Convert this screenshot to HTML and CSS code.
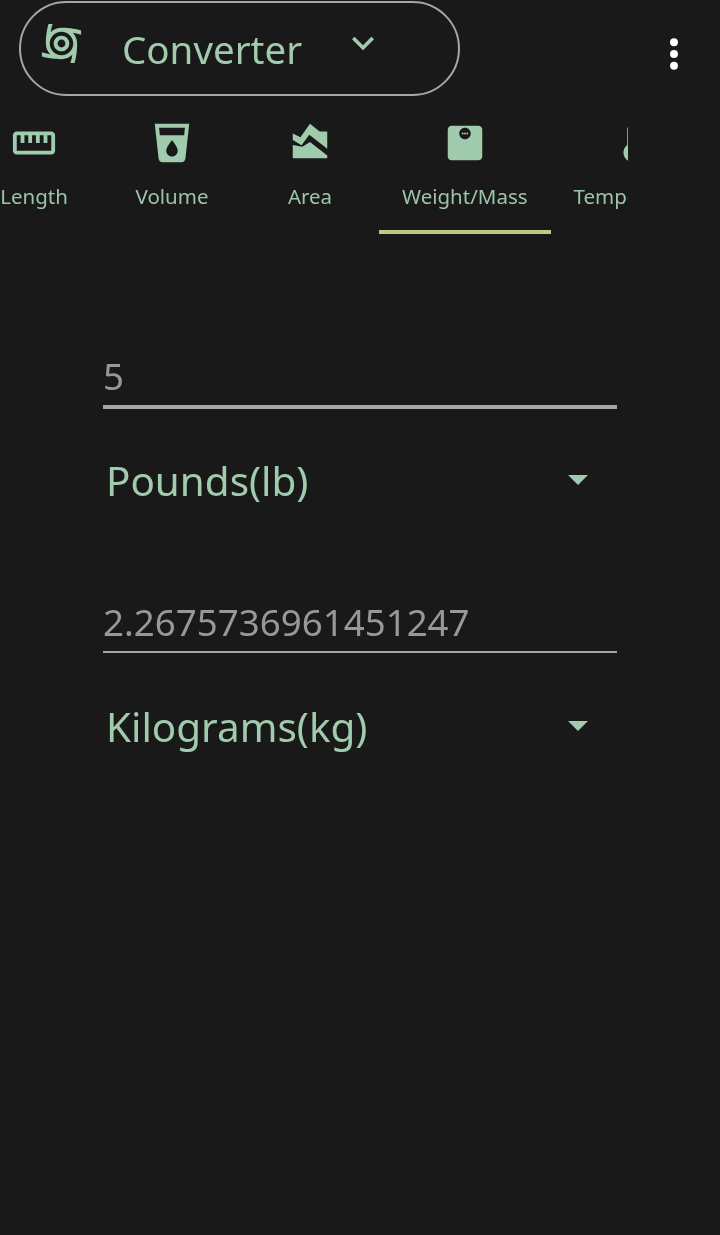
FILE: index.html
```html
<!DOCTYPE html>
<html lang="en">
<head>
<meta charset="utf-8">
<title>Converter</title>
<link rel="stylesheet" href="styles.css">
</head>
<body>
<header class="appbar">
  <div class="pill">
    <svg class="pill-logo" viewBox="0 0 24 24"><path fill-rule="evenodd" d="M22,7.47V5.35C20.05,4.77,16.56,4,12,4C9.85,4,7.89,4.86,6.46,6.24C6.59,5.39,6.86,3.84,7.47,2H5.35C4.77,3.95,4,7.44,4,12c0,2.15,0.86,4.11,2.24,5.54c-0.85-0.14-2.4-0.4-4.24-1.01v2.12C3.95,19.23,7.44,20,12,20c2.15,0,4.11-0.86,5.54-2.24c-0.14,0.85-0.4,2.4-1.01,4.24h2.12C19.23,20.05,20,16.56,20,12c0-2.15-0.86-4.11-2.24-5.54C18.61,6.59,20.16,6.86,22,7.47z M12,18c-3.31,0-6-2.69-6-6s2.69-6,6-6s6,2.69,6,6S15.31,18,12,18z"/><path fill-rule="evenodd" d="M12,8c-2.21,0-4,1.79-4,4s1.79,4,4,4s4-1.79,4-4S14.21,8,12,8z M12,14c-1.1,0-2-0.9-2-2s0.9-2,2-2s2,0.9,2,2S13.1,14,12,14z"/></svg>
    <span class="pill-title">Converter</span>
    <svg class="pill-chevron" viewBox="0 0 24 24"><path d="M16.59 8.59L12 13.17 7.41 8.59 6 10l6 6 6-6z"/></svg>
  </div>
  <svg class="menu" viewBox="0 0 24 24"><circle cx="12" cy="5.6" r="2.15"/><circle cx="12" cy="12" r="2.15"/><circle cx="12" cy="18.4" r="2.15"/></svg>
</header>
<nav class="tabs">
  <div class="tab-strip">
    <div class="tab">
      <svg class="tab-icon" viewBox="0 0 24 24"><path d="M21 6H3c-1.1 0-2 .9-2 2v8c0 1.1.9 2 2 2h18c1.1 0 2-.9 2-2V8c0-1.1-.9-2-2-2zm0 10H3V8h2v4h2V8h2v4h2V8h2v4h2V8h2v4h2V8h2v8z"/></svg>
      <span class="tab-label">Length</span>
    </div>
    <div class="tab">
      <svg class="tab-icon" viewBox="0 0 24 24"><path d="M3 2l2.01 18.23C5.13 21.23 5.97 22 7 22h10c1.03 0 1.87-.77 1.99-1.77L21 2H3zm9 17c-1.66 0-3-1.34-3-3 0-2 3-5.4 3-5.4s3 3.4 3 5.4c0 1.66-1.34 3-3 3zm6.33-11H5.67l-.44-4h13.53l-.43 4z"/></svg>
      <span class="tab-label">Volume</span>
    </div>
    <div class="tab">
      <svg class="tab-icon" viewBox="0 0 24 24"><path d="M3,13v7h18v-1.5l-9-7L8,14L3,13z M3,7l4,2l5-7l5,4h4v8.97l-9.4-7.31l-3.98,5.48L3,10.44V7z"/></svg>
      <span class="tab-label">Area</span>
    </div>
    <div class="tab tab-active">
      <svg class="tab-icon" viewBox="0 0 24 24"><path fill-rule="evenodd" d="M5 3h14c1.1 0 2 .9 2 2v14c0 1.1-.9 2-2 2H5c-1.1 0-2-.9-2-2V5c0-1.1.9-2 2-2zM12 4c-1.66 0-3 1.34-3 3s1.34 3 3 3 3-1.34 3-3-1.34-3-3-3z"/><circle cx="10.8" cy="7" r=".5"/><circle cx="12" cy="7" r=".5"/><circle cx="13.2" cy="7" r=".5"/></svg>
      <span class="tab-label">Weight/Mass</span>
    </div>
    <div class="tab">
      <svg class="tab-icon tab-icon-temp" viewBox="0 0 24 24"><path d="M15 13V5c0-1.66-1.34-3-3-3S9 3.34 9 5v8c-1.21.91-2 2.37-2 4 0 2.76 2.24 5 5 5s5-2.24 5-5c0-1.63-.79-3.09-2-4zm-4-8c0-.55.45-1 1-1s1 .45 1 1h-1v1h1v2h-1v1h1v2h-2V5z"/></svg>
      <span class="tab-label">Temperature</span>
    </div>
  </div>
</nav>
<main class="form">
  <section class="unit-group">
    <div class="field field-focused">5</div>
    <div class="select"><span>Pounds(lb)</span><i class="caret"></i></div>
  </section>
  <section class="unit-group">
    <div class="field">2.2675736961451247</div>
    <div class="select"><span>Kilograms(kg)</span><i class="caret"></i></div>
  </section>
</main>
</body>
</html>
```
FILE: styles.css
```css
* { box-sizing: border-box; }
html, body { margin: 0; height: 100%; }
body {
  background: #191919;
  color: #a1cbad;
  font-family: "Noto Sans", sans-serif;
  overflow: hidden;
}
svg { display: block; fill: #a1cbad; }
.appbar, .tabs, .form { will-change: opacity; }

.appbar {
  display: flex;
  align-items: flex-start;
  height: 106px;
  padding: 1px 0 0 19px;
}
.pill {
  display: flex;
  width: 441px;
  height: 95px;
  border: 2px solid #a6a6a6;
  border-radius: 48px;
  padding: 0 0 0 17px;
}
.pill-logo { width: 47px; height: 47px; margin-top: 17px; flex: none; }
.pill-title {
  margin-left: 37px;
  font-size: 38.5px;
  line-height: 92px;
  width: 219px;
}
.pill-chevron { width: 44px; height: 44px; margin-top: 18px; flex: none; }
.menu { width: 44px; height: 44px; margin: 31px 0 0 192px; fill: #fff; flex: none; }

.tabs { width: 628px; height: 128px; overflow: hidden; }
.tab-strip { display: flex; margin-left: -35px; width: 900px; height: 100%; }
.tab {
  display: flex;
  flex-direction: column;
  align-items: center;
  min-width: 138px;
  padding: 14px 23px 0;
  height: 128px;
  flex: none;
}
.tab-active { border-bottom: 4px solid #bdcb82; }
.tab-icon { width: 46px; height: 46px; flex: none; }
.tab-icon-temp { margin-right: 5px; }
.tab-label { margin-top: 15px; font-size: 20.5px; line-height: 30px; color: #9cc5a8; white-space: nowrap; }

.form { padding: 115px 103px 0; }
.unit-group { height: 246px; }
.field {
  padding: 0 0 2px;
  border-bottom: 2px solid #a6a6a6;
  color: #989898;
  font-size: 36.7px;
  line-height: 54px;
}
.field-focused { border-bottom-width: 4px; }
.select {
  display: flex;
  justify-content: space-between;
  align-items: center;
  padding: 0 29px 0 3px;
  margin-top: 44px;
  height: 60px;
  font-size: 40.4px;
  line-height: 60px;
}
.field-focused + .select { margin-top: 42px; }
.caret {
  width: 0;
  height: 0;
  margin-top: -2px;
  border-left: 10px solid transparent;
  border-right: 10px solid transparent;
  border-top: 10px solid #a1cbad;
}
```
